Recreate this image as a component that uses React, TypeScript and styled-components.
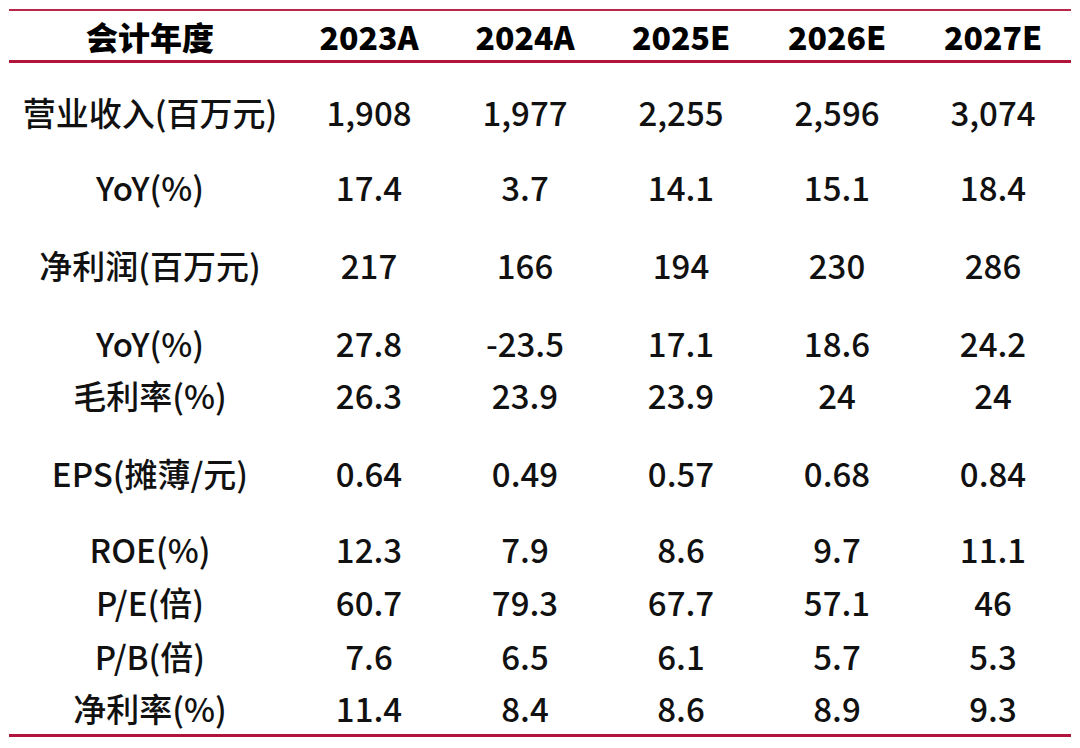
import React from "react";
import styled, { createGlobalStyle } from "styled-components";

const HEADERS = ["2023A", "2024A", "2025E", "2026E", "2027E"];

const ROWS = [
  { label: "营业收入(百万元)", values: ["1,908", "1,977", "2,255", "2,596", "3,074"], gap: 23 },
  { label: "YoY(%)", values: ["17.4", "3.7", "14.1", "15.1", "18.4"], gap: 23 },
  { label: "净利润(百万元)", values: ["217", "166", "194", "230", "286"], gap: 26 },
  { label: "YoY(%)", values: ["27.8", "-23.5", "17.1", "18.6", "24.2"], gap: 26 },
  { label: "毛利率(%)", values: ["26.3", "23.9", "23.9", "24", "24"], gap: 0 },
  { label: "EPS(摊薄/元)", values: ["0.64", "0.49", "0.57", "0.68", "0.84"], gap: 26 },
  { label: "ROE(%)", values: ["12.3", "7.9", "8.6", "9.7", "11.1"], gap: 24 },
  { label: "P/E(倍)", values: ["60.7", "79.3", "67.7", "57.1", "46"], gap: 1 },
  { label: "P/B(倍)", values: ["7.6", "6.5", "6.1", "5.7", "5.3"], gap: 2 },
  { label: "净利率(%)", values: ["11.4", "8.4", "8.6", "8.9", "9.3"], gap: 0 },
];

const GlobalStyle = createGlobalStyle`
  html, body {
    margin: 0;
    padding: 0;
    background: #ffffff;
  }
  body {
    font-family: "Noto Sans CJK SC", "Noto Sans", sans-serif;
    color: #111111;
  }
`;

export default function App() {
  return (
    <>
      <GlobalStyle />
      <Page>
        <Table>
          <HeaderRow>
            <LabelCell>会计年度</LabelCell>
            {HEADERS.map((h) => (
              <Cell key={h}>{h}</Cell>
            ))}
          </HeaderRow>
          {ROWS.map((row, i) => (
            <Row key={i} $gap={row.gap}>
              <LabelCell>{row.label}</LabelCell>
              {row.values.map((v, j) => (
                <Cell key={j}>{v}</Cell>
              ))}
            </Row>
          ))}
        </Table>
      </Page>
    </>
  );
}

const Page = styled.div`
  width: 1080px;
  height: 748px;
  padding: 9px 9px 0 9px;
  box-sizing: border-box;
  overflow: hidden;
`;

const Table = styled.div`
  border-top: 2px solid #b8264a;
  border-bottom: 3px solid #b0163c;
  display: flex;
  flex-direction: column;
`;

const HeaderRow = styled.div`
  display: grid;
  grid-template-columns: 282px repeat(5, 156px);
  height: 49px;
  align-items: center;
  border-bottom: 3px solid #b0163c;
  font-weight: 900;
  font-size: 32px;
  color: #000;
`;

const Row = styled.div<{ $gap: number }>`
  display: grid;
  grid-template-columns: 282px repeat(5, 156px);
  height: 52px;
  margin-top: ${(p) => p.$gap}px;
  align-items: center;
  font-weight: 500;
  font-size: 33px;
`;

const LabelCell = styled.div`
  text-align: center;
  white-space: nowrap;
`;

const Cell = styled.div`
  text-align: center;
  white-space: nowrap;
`;
